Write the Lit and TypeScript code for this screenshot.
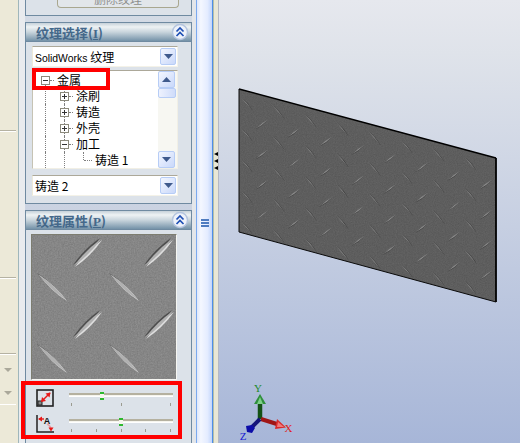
import { LitElement, html, css, svg } from "lit";
import { customElement } from "lit/decorators.js";

const chev = svg`<svg class="chev" width="18" height="18" viewBox="0 0 18 18"><circle cx="9" cy="9" r="7.500" fill="#eef2fa" stroke="#b4c4de" stroke-width="1.400"/><path d="M5.500 8.500 9 5l3.500 3.500M5.500 13 9 9.500l3.500 3.500" fill="none" stroke="#1f4fb4" stroke-width="1.700"/></svg>`;

function lens(x1: number, y1: number, x2: number, y2: number, w: number) {
  const mx = (x1 + x2) / 2, my = (y1 + y2) / 2;
  const dx = x2 - x1, dy = y2 - y1, l = Math.hypot(dx, dy);
  const px = (-dy / l) * w, py = (dx / l) * w;
  return `M${x1} ${y1}Q${mx + px} ${my + py} ${x2} ${y2}Q${mx - px} ${my - py} ${x1} ${y1}Z`;
}

const swatchLenses: [number, number, number, number][] = [
  [74, 266, 101, 239], [145, 266, 172, 239], [38, 274, 66, 300], [110, 274, 138, 300],
  [74, 338, 101, 311], [145, 338, 173, 311], [38, 345, 66, 372], [110, 345, 138, 372],
];

const plateBack: [number, number][] = [];
const plateFwd: [number, number][] = [];
for (let u = 0; u < 8; u++) {
  for (let v = 0; v < 5; v++) plateBack.push([245 + 32 * u, 103 + 8.6 * u + 31 * v]);
  for (let v = 0; v < 4; v++) plateFwd.push([261 + 32 * u, 124 + 8.6 * u + 30.300 * v]);
}

const noise = (id: string, alpha: number, freq: number) => svg`
  <filter id=${id} x="0" y="0" width="100%" height="100%" color-interpolation-filters="sRGB">
    <feTurbulence type="fractalNoise" baseFrequency=${freq} numOctaves="3" seed="4" result="t"/>
    <feColorMatrix in="t" type="matrix" values="1.200 0 0 0 -0.100  1.200 0 0 0 -0.100  1.200 0 0 0 -0.100  0 0 0 0 ${alpha}" result="g"/>
    <feComposite in="g" in2="SourceGraphic" operator="in" result="c"/>
    <feMerge><feMergeNode in="SourceGraphic"/><feMergeNode in="c"/></feMerge>
  </filter>`;

const swatch = svg`<svg class="swatch" width="144" height="144" viewBox="32 235 144 144">
  <defs>${noise("nsw", 0.1, 0.7)}</defs>
  <rect x="32" y="235" width="144" height="144" fill="#878787" filter="url(#nsw)"/>
  ${swatchLenses.map(([a, b, c, d]) => svg`
    <path d=${lens(a, b, c, d, 3.600)} fill="#4e4e4e" transform="translate(-1 -1)"/>
    <path d=${lens(a, b, c, d, 3.600)} fill="#dedede" transform="translate(1 1)"/>
    <path d=${lens(a, b, c, d, 3.200)} fill="#b0b0b0"/>`)}
</svg>`;

const view = svg`<svg class="scene" width="302" height="443" viewBox="218 0 302 443">
  <defs>${noise("npl", 0.06, 0.9)}<clipPath id="pc"><path d="M238 89 495 158V302L238 232Z"/></clipPath></defs>
  <path d="M238 89 495 158V302L238 232Z" fill="#5c5c5c" filter="url(#npl)"/>
  <g clip-path="url(#pc)">
    ${plateBack.map(([x, y]) => svg`
      <path d=${lens(x - 6, y - 7, x + 6, y + 7, 1.700)} fill="#343434" transform="translate(.7 .5)"/>
      <path d=${lens(x - 6, y - 7, x + 6, y + 7, 1.300)} fill="#7c7c7c"/>`)}
    ${plateFwd.map(([x, y]) => svg`
      <path d=${lens(x - 6, y + 4.500, x + 6, y - 4.500, 1.700)} fill="#3a3a3a" transform="translate(-.5 .7)"/>
      <path d=${lens(x - 6, y + 4.500, x + 6, y - 4.500, 1.400)} fill="#8a8a8a"/>`)}
  </g>
  <path d="M238 89 495 158" stroke="#000" stroke-width="1.500" fill="none"/>
  <path d="M495 158V302" stroke="#000" stroke-width="1.800" fill="none"/>
  <path d="M238 89V232L495 302" stroke="#0a0a0a" stroke-width="1" fill="none"/>

  <path d="M259 419V404" stroke="#145214" stroke-width="4.500"/>
  <path d="M259 394 265 404H253Z" fill="#2f8f3c"/><path d="M259 397 262 404H256Z" fill="#7ed08a"/>
  <path d="M260 419 279 425" stroke="#a01616" stroke-width="4"/>
  <path d="M285 427.500 274 429 276 419Z" fill="#d92a2a"/><path d="M283 427 276 427 277 422Z" fill="#f07a7a"/>
  <path d="M259 419 250 428" stroke="#14147a" stroke-width="4"/>
  <path d="M246 432 245 426 251 425 254 428 251 433Z" fill="#0c0ca8"/>
  <text x="257" y="392" class="ax" fill="#1c8a2c" text-anchor="middle">Y</text>
  <text x="287.500" y="432" class="ax" fill="#e02020" text-anchor="middle">X</text>
  <text x="242" y="440" class="ax" fill="#1818d0" text-anchor="middle">Z</text>
</svg>`;

const scaleIcon = svg`<svg width="18" height="18" viewBox="0 0 18 18">
  <rect x="1" y="1" width="16" height="16" fill="#dde2e8" stroke="#222" stroke-width="1.600"/>
  <rect x="2" y="12" width="4" height="4" fill="#888" stroke="#222"/>
  <path d="M6 12 14 4" stroke="#e81818" stroke-width="1.500"/>
  <path d="M14.500 3.500 9.500 4.500 13.500 8.500ZM5 13 10 12 6 8Z" fill="#e81818"/>
</svg>`;

const rotIcon = svg`<svg width="18" height="18" viewBox="0 0 18 18">
  <path d="M1 0V17H18" fill="none" stroke="#222" stroke-width="1.500"/>
  <path d="M3 4H8" stroke="#e81818" stroke-width="1.400"/><path d="M2 4 6 1.500V6.500Z" fill="#e81818"/>
  <path d="M11 9Q15 11 15 15" fill="none" stroke="#e8a0a8" stroke-width="1.600"/>
  <path d="M15 16.500 12.500 12.500H17.500Z" fill="#e81818"/>
  <text x="11" y="9" class="a" text-anchor="middle">A</text>
</svg>`;

type Cell = "" | "line" | "tee" | "elbow" | "plus" | "minus" | "minus-root";
const rows: { cells: Cell[]; text: string }[] = [
  { cells: ["minus-root"], text: "金属" },
  { cells: ["line", "plus"], text: "涂刷" },
  { cells: ["line", "plus"], text: "铸造" },
  { cells: ["line", "plus"], text: "外壳" },
  { cells: ["line", "minus"], text: "加工" },
  { cells: ["line", "line", "tee"], text: "铸造 1" },
];

const arrowDown = svg`<svg width="9" height="5" viewBox="0 0 9 5"><path d="M0 0H9L4.500 5Z" fill="#3f5a8c"/></svg>`;
const arrowUp = svg`<svg width="9" height="5" viewBox="0 0 9 5"><path d="M0 5H9L4.500 0Z" fill="#3f5a8c"/></svg>`;

@customElement("app-root")
export class AppRoot extends LitElement {
  static styles = css`
    :host { display: block; width: 520px; height: 443px; overflow: hidden; font-family: "Liberation Sans", "Noto Sans CJK SC", sans-serif; font-size: 12px; color: #000; }
    .app { position: relative; display: flex; width: 520px; height: 443px; }

    .strip { width: 18px; flex: none; background: #ece9d8; border-right: 1px solid #9fb6bb; box-sizing: content-box; }
    .sect { width: 16px; box-sizing: border-box; border-bottom: 1px solid #b5b2a2; box-shadow: 0 1px 0 #fff; display: flex; align-items: flex-end; justify-content: flex-end; }
    .s1 { height: 131px; } .s2 { height: 147px; } .s3 { height: 76px; }
    .s4 { height: 51px; border-bottom-color: #fff; box-shadow: none; flex-direction: column; align-items: center; justify-content: flex-start; gap: 19px; padding: 14px 0 0; }
    .tri { width: 0; height: 0; border: 4px solid transparent; border-top: 4px solid #aaa89a; border-bottom: 0; }

    .pm { width: 177px; flex: none; box-sizing: border-box; padding: 0 4px 0 6px; display: flex; flex-direction: column; gap: 6px; background: linear-gradient(90deg, #e9ebee 0 6px, transparent 6px calc(100% - 4px), #e3e6ea calc(100% - 4px)), linear-gradient(#d4dbe5, #bfc9de); }
    .panel { background: #dce2e9; border: 1px solid #6f8aa1; box-sizing: border-box; flex: none; }
    .p1 { height: 16px; border-top: 0; display: flex; justify-content: flex-end; padding-right: 12px; }
    .delbtn { width: 122px; height: 8px; box-sizing: border-box; border: 1px solid #a9a78f; border-top: 0; border-radius: 0 0 4px 4px; color: #8d8f8e; text-align: center; line-height: 1px; font-size: 12px; overflow: hidden; background: #e2e6ea; }
    .p2 { height: 182px; }
    .p3 { height: 240px; }
    .head { height: 18px; display: flex; align-items: center; justify-content: space-between; padding: 0 2px 0 10px; background: linear-gradient(#c6d1d9, #eef2f4 22%, #c9d5dd 50%, #7492a8); border-bottom: 1px solid #6f8aa1; box-sizing: content-box; }
    .title { font-size: 13px; font-weight: 700; color: #44688a; font-family: "Noto Sans CJK SC", sans-serif; }
    .title u { font-family: "Liberation Serif", serif; }
    .chev { display: block; }

    .body2 { padding: 4px 13px 0 6px; display: flex; flex-direction: column; }
    .combo { height: 21px; background: #fff; border-top: 1px solid #aca899; border-left: 1px solid #ece9d8; border-right: 1px solid #f4f2e8; border-bottom: 1px solid #f4f2e8; box-sizing: border-box; display: flex; align-items: center; justify-content: space-between; padding: 0 1px 0 2px; font-size: 10.400px; }
    .combo .cjk { font-size: 12px; font-family: "Noto Sans CJK SC", sans-serif; }
    .dbtn { width: 16px; height: 17px; box-sizing: border-box; background: linear-gradient(135deg, #f4f7ff, #c9d8fa); border: 1px solid #b7cdf6; border-radius: 2px; display: flex; align-items: center; justify-content: center; flex: none; }
    .tree { height: 99px; margin: 3px 0 6px; background: #fff; border-top: 1px solid #aca899; border-left: 1px solid #c6c3b4; border-right: 1px solid #f1efe5; border-bottom: 1px solid #f1efe5; box-sizing: border-box; display: flex; overflow: hidden; }
    .items { flex: 1; padding: 1px 0 0 3px; min-width: 0; }
    .row { display: flex; height: 16px; align-items: center; font-family: "Noto Sans CJK SC", sans-serif; font-size: 12px; line-height: 16px; }
    .cell { position: relative; width: 19px; height: 16px; flex: none; }
    .cell.line::before, .cell.tee::before, .cell.plus::before, .cell.minus::before, .cell.minus-root::before { content: ""; position: absolute; left: 9px; top: 0; bottom: 0; border-left: 1px dotted #808080; }
    .cell.minus-root::before { top: 8px; }
    .cell.tee::before { bottom: 8px; }
    .cell.tee::after { content: ""; position: absolute; left: 10px; width: 8px; top: 8px; border-top: 1px dotted #808080; }
    .cell.plus::after, .cell.minus::after, .cell.minus-root::after { content: ""; position: absolute; left: 14px; width: 4px; top: 8px; border-top: 1px dotted #808080; }
    .exp { position: absolute; left: 5px; top: 4px; width: 9px; height: 9px; box-sizing: border-box; background: #fff; border: 1px solid #8c8a7c; z-index: 1; }
    .exp::before { content: ""; position: absolute; left: 1px; right: 1px; top: 3px; height: 1px; background: #333; }
    .plus .exp::after { content: ""; position: absolute; top: 1px; bottom: 1px; left: 3px; width: 1px; background: #333; }
    .label { padding-left: 2px; white-space: pre; }
    .sb { width: 18px; flex: none; display: flex; flex-direction: column; background: #f7f7f2; padding: 0 1px 0 0; }
    .sb .dbtn { height: 17px; width: 17px; }
    .thumb { height: 10px; box-sizing: border-box; background: linear-gradient(90deg, #eef2fe, #cfdcfa); border: 1px solid #b7cdf6; border-radius: 2px; }
    .fill { flex: 1; }

    .img { margin: 4px 0 0 5px; width: 146px; height: 146px; box-sizing: border-box; border: 1px solid; border-color: #7d7d70 #f6f6f2 #f6f6f2 #7d7d70; background: #888; overflow: hidden; }
    .swatch { display: block; }
    .ctrls { padding: 9px 0 0 10px; display: flex; flex-direction: column; gap: 8px; }
    .crow { display: flex; gap: 15px; align-items: flex-start; height: 18px; }
    .crow svg { display: block; flex: none; }
    .a { font: 700 9px "Liberation Sans", sans-serif; fill: #111; }
    .slider { width: 104px; padding-top: 4px; position: relative; }
    .track { height: 4px; box-sizing: border-box; background: #f6f5ee; border-top: 2px solid #b5b1a0; border-bottom: 1px solid #fff; }
    .ticks { display: flex; justify-content: space-between; padding: 6px 2px 0; }
    .ticks i { width: 1px; height: 3px; background: #9b9b90; display: block; }
    .knob { position: absolute; top: 3px; width: 4px; height: 8px; background: #f6f6ee; border-top: 2px solid #2eb82e; border-bottom: 2px solid #2eb82e; box-sizing: border-box; }

    .sash { width: 17px; flex: none; box-sizing: border-box; background: linear-gradient(90deg, #dfe8fb, #f4f7ff 25%, #e4ecff 70%, #c3d6fb); border-left: 1px solid #7ba9ee; border-right: 1px solid #4f8ee8; display: flex; align-items: flex-start; justify-content: center; padding-top: 219px; }
    .burger { display: flex; flex-direction: column; gap: 1px; width: 8px; }
    .burger i { display: block; height: 2px; background: #4f7cc0; }
    .gut { width: 6px; flex: none; box-sizing: border-box; background: #e9e7d6; border-left: 1px solid #b4bfa8; border-right: 1px solid #b4b8c4; display: flex; flex-direction: column; align-items: center; gap: 3px; padding-top: 152px; }
    .gut b { display: block; width: 0; height: 0; border: 2.500px solid transparent; border-right: 4px solid #000; border-left: 0; }
    .view { flex: 1; background: linear-gradient(#e6e8ee, #dfe3ea 12%, #a7b6d8); }
    .scene { display: block; }
    .ax { font: 11px "Liberation Serif", serif; }

    .red { position: absolute; box-sizing: border-box; border: 4px solid #f00; pointer-events: none; }
    .r1 { left: 32px; top: 68px; width: 78px; height: 22px; }
    .r2 { left: 21px; top: 381px; width: 161px; height: 58px; }
  `;

  private combo(content: unknown) {
    return html`<div class="combo"><span>${content}</span><span class="dbtn">${arrowDown}</span></div>`;
  }

  render() {
    return html`<div class="app">
      <div class="strip">
        <div class="sect s1"></div>
        <div class="sect s2"></div>
        <div class="sect s3"></div>
        <div class="sect s4"><i class="tri"></i><i class="tri"></i></div>
      </div>
      <div class="pm">
        <div class="panel p1"><div class="delbtn">删除纹理</div></div>
        <div class="panel p2">
          <div class="head"><span class="title">纹理选择(<u>I</u>)</span>${chev}</div>
          <div class="body2">
            ${this.combo(html`SolidWorks <span class="cjk">纹理</span>`)}
            <div class="tree">
              <div class="items">
                ${rows.map((r) => html`<div class="row">
                  ${r.cells.map((c) => html`<span class="cell ${c}">${c === "plus" || c === "minus" || c === "minus-root" ? html`<span class="exp"></span>` : ""}</span>`)}
                  <span class="label">${r.text}</span>
                </div>`)}
              </div>
              <div class="sb">
                <span class="dbtn">${arrowUp}</span>
                <div class="thumb"></div>
                <div class="fill"></div>
                <span class="dbtn">${arrowDown}</span>
              </div>
            </div>
            ${this.combo(html`<span class="cjk">铸造 2</span>`)}
          </div>
        </div>
        <div class="panel p3">
          <div class="head"><span class="title">纹理属性(<u>P</u>)</span>${chev}</div>
          <div class="img">${swatch}</div>
          <div class="ctrls">
            <div class="crow">${scaleIcon}
              <div class="slider"><div class="track"></div><span class="knob" style="left:31px"></span><div class="ticks"><i></i><i></i><i></i></div></div>
            </div>
            <div class="crow">${rotIcon}
              <div class="slider"><div class="track"></div><span class="knob" style="left:50px"></span><div class="ticks"><i></i><i></i><i></i><i></i><i></i></div></div>
            </div>
          </div>
        </div>
      </div>
      <div class="sash"><div class="burger"><i></i><i></i><i></i></div></div>
      <div class="gut"><b></b><b></b><b></b></div>
      <div class="view">${view}</div>
      <div class="red r1"></div>
      <div class="red r2"></div>
    </div>`;
  }
}
